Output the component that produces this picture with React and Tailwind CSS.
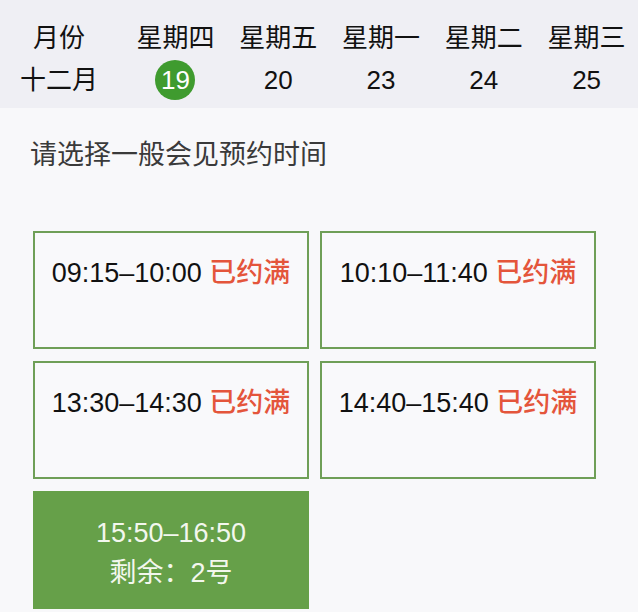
import React from "react";

const days = [
  { label: "星期四", date: "19", active: true },
  { label: "星期五", date: "20" },
  { label: "星期一", date: "23" },
  { label: "星期二", date: "24" },
  { label: "星期三", date: "25" },
];

const slots = [
  { time: "09:15–10:00", full: true },
  { time: "10:10–11:40", full: true },
  { time: "13:30–14:30", full: true },
  { time: "14:40–15:40", full: true },
  { time: "15:50–16:50", left: 2 },
];

const font = {
  fontFamily: '"Liberation Sans", "Noto Sans CJK SC", sans-serif',
};

export default function App() {
  return (
    <div className="w-[638px] h-[612px] overflow-hidden bg-[#f8f8fa]" style={font}>
      <div className="flex h-[108px] bg-[#efeff4] pt-[20px] text-[26px] text-[#111]">
        <div className="flex w-[124px] flex-col items-center pr-[6px]">
          <div className="h-[36px] leading-[36px]">月份</div>
          <div className="mt-[4px] flex h-[40px] items-center">十二月</div>
        </div>
        {days.map((d) => (
          <div key={d.date} className="flex flex-1 flex-col items-center">
            <div className="h-[36px] leading-[36px]">{d.label}</div>
            <div className="mt-[4px] flex h-[40px] items-center justify-center">
              {d.active ? (
                <span className="flex h-[40px] w-[40px] items-center justify-center rounded-full bg-[#3f9b2f] text-white">
                  {d.date}
                </span>
              ) : (
                d.date
              )}
            </div>
          </div>
        ))}
      </div>

      <div className="pl-[30px] pt-[29px] text-[27px] leading-[36px] text-[#3a3a3a]">
        请选择一般会见预约时间
      </div>

      <div className="ml-[33px] mt-[58px] grid grid-cols-[276px_276px] gap-x-[11px] gap-y-[12px]">
        {slots.map((s) =>
          s.full ? (
            <div
              key={s.time}
              className="h-[118px] border-2 border-[#6f9f57] bg-[#f9f9fb] pt-[24px] text-center text-[27px] leading-[32px] text-[#111]"
            >
              {s.time} <span className="font-medium text-[#e4553b]">已约满</span>
            </div>
          ) : (
            <div
              key={s.time}
              className="h-[118px] bg-[#66a049] pt-[22px] text-center text-[27px] leading-[40px] text-[#f3f7ee]"
            >
              <div>{s.time}</div>
              <div>剩余：{s.left}号</div>
            </div>
          )
        )}
      </div>
    </div>
  );
}
